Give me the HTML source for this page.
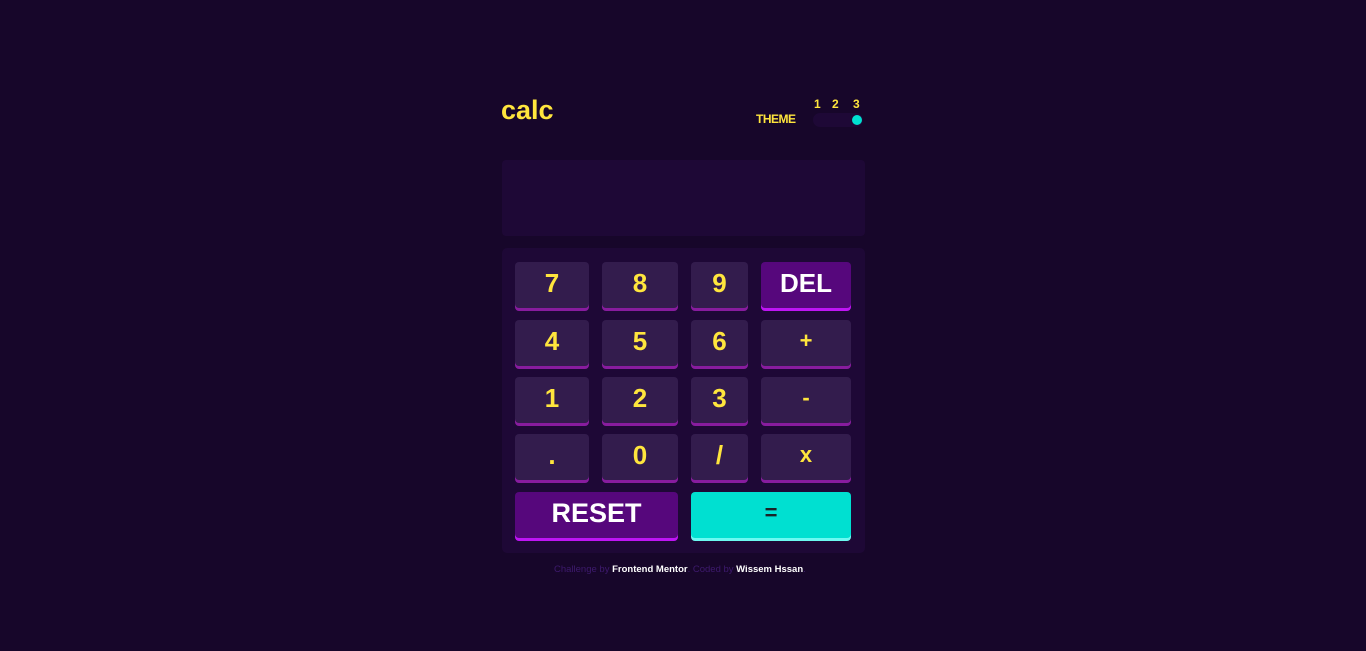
<!DOCTYPE html>
<html><head><meta charset="utf-8"><style>
body{margin:0;width:1366px;height:651px;background:#17062a;font-family:"Liberation Sans",sans-serif;position:relative;overflow:hidden}
.a{position:absolute}
.k{position:absolute;background:#331c4d;border-radius:4px;box-shadow:0 3px 0 #881c9e;color:#ffe53d;font-weight:bold;font-size:26px;display:flex;align-items:center;justify-content:center;height:46px;padding-bottom:4px;box-sizing:border-box}
.d{background:#56077c;box-shadow:0 3px 0 #be15f4;color:#fff}
.e{background:#00e0d1;box-shadow:0 3px 0 #6cf9f1;color:#1a2327}
</style></head><body>
<div class="a" style="left:501px;top:95px;color:#ffe53d;font-weight:bold;font-size:27px;letter-spacing:0px">calc</div>
<div class="a" style="left:756px;top:112px;color:#ffe53d;font-weight:bold;font-size:12px;letter-spacing:-0.5px">THEME</div>
<div class="a" style="left:814px;top:97px;color:#ffe53d;font-weight:bold;font-size:12px">1</div>
<div class="a" style="left:832px;top:97px;color:#ffe53d;font-weight:bold;font-size:12px">2</div>
<div class="a" style="left:853px;top:97px;color:#ffe53d;font-weight:bold;font-size:12px">3</div>
<div class="a" style="left:813px;top:113px;width:50px;height:14px;border-radius:7px;background:#1e0836"></div>
<div class="a" style="left:852px;top:115px;width:10px;height:10px;border-radius:50%;background:#00e0d1"></div>
<div class="a" style="left:502px;top:160px;width:363px;height:76px;background:#1e0836;border-radius:4px"></div>
<div class="a" style="left:502px;top:248px;width:363px;height:305px;background:#1e0836;border-radius:5px"></div>
<div class="k" style="left:515px;top:262px;width:74px">7</div>
<div class="k" style="left:602px;top:262px;width:76px">8</div>
<div class="k" style="left:691px;top:262px;width:57px">9</div>
<div class="k d" style="left:761px;top:262px;width:90px">DEL</div>
<div class="k" style="left:515px;top:320px;width:74px">4</div>
<div class="k" style="left:602px;top:320px;width:76px">5</div>
<div class="k" style="left:691px;top:320px;width:57px">6</div>
<div class="k" style="left:761px;top:320px;width:90px;font-size:22px">+</div>
<div class="k" style="left:515px;top:377px;width:74px">1</div>
<div class="k" style="left:602px;top:377px;width:76px">2</div>
<div class="k" style="left:691px;top:377px;width:57px">3</div>
<div class="k" style="left:761px;top:377px;width:90px;font-size:22px">-</div>
<div class="k" style="left:515px;top:434px;width:74px">.</div>
<div class="k" style="left:602px;top:434px;width:76px">0</div>
<div class="k" style="left:691px;top:434px;width:57px">/</div>
<div class="k" style="left:761px;top:434px;width:90px;font-size:22px">x</div>
<div class="k d" style="left:515px;top:492px;width:163px;font-size:27px">RESET</div>
<div class="k e" style="left:691px;top:492px;width:160px;font-size:22px">=</div>
<div class="a" style="left:554px;top:564px;font-size:9.5px;color:#3e1a6e;white-space:nowrap">Challenge by <b style="color:#fff">Frontend Mentor</b>. Coded by <b style="color:#fff">Wissem Hssan</b>.</div>
</body></html>
